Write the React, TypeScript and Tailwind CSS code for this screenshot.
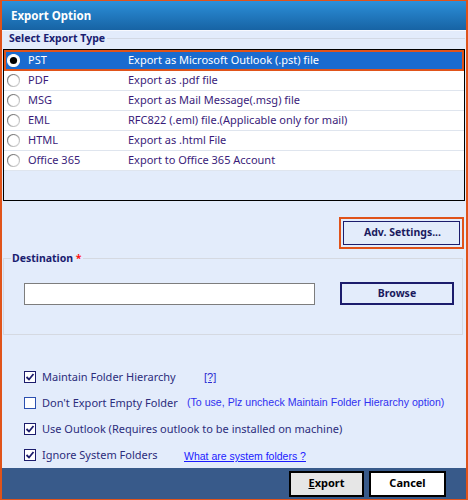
import React from "react";

const rows = [
  { k: "PST", d: "Export as Microsoft Outlook (.pst) file" },
  { k: "PDF", d: "Export as .pdf file" },
  { k: "MSG", d: "Export as Mail Message(.msg) file" },
  { k: "EML", d: "RFC822 (.eml) file.(Applicable only for mail)" },
  { k: "HTML", d: "Export as .html File" },
  { k: "Office 365", d: "Export to Office 365 Account" },
];

function Radio({ on }: { on: boolean }) {
  return (
    <svg width="13" height="13" viewBox="0 0 13 13" className="shrink-0">
      <defs>
        <linearGradient id={on ? "rg1" : "rg0"} x1="0" y1="0" x2="1" y2="1">
          <stop offset="0" stopColor={on ? "#f4f4f4" : "#6f6f6f"} />
          <stop offset="1" stopColor={on ? "#ffffff" : "#e2e2e2"} />
        </linearGradient>
      </defs>
      <circle cx="6.5" cy="6.5" r="6" fill="#ffffff" stroke={`url(#${on ? "rg1" : "rg0"})`} strokeWidth="1.2" />
      {on && <circle cx="6.5" cy="6.5" r="3.6" fill="#000000" />}
    </svg>
  );
}

function Check({ on }: { on: boolean }) {
  return (
    <span className={`flex h-[12px] w-[12px] shrink-0 items-center justify-center border bg-white ${on ? "border-[#1c1c6c]" : "border-[#2a4fb0]"}`}>
      {on && (
        <svg width="10" height="10" viewBox="0 0 10 10">
          <path d="M1.5 5 L4 7.5 L8.5 2" fill="none" stroke="#1c1c6c" strokeWidth="1.8" />
        </svg>
      )}
    </span>
  );
}

const arial = { fontFamily: '"Liberation Sans", Arial, sans-serif' };

export default function App() {
  const font = { fontFamily: '"Noto Sans", "Open Sans", sans-serif' };
  return (
    <div
      className="flex h-[500px] w-[468px] flex-col border-x-2 border-t border-b border-[#e0531a] bg-[#e3ecfb] text-[11px] whitespace-nowrap"
      style={font}
    >
      <div className="flex h-[29px] shrink-0 items-center bg-gradient-to-b from-[#2c90da] to-[#1763a4] pl-[9px] text-[11.5px] font-bold text-white">
        Export Option
      </div>
      <div className="h-[1px] bg-white/70" />
      <div className="mt-[1px] flex h-[14px] items-center pl-[7px] pr-[1px]">
        <span className="text-[10.5px] font-bold text-[#1a2070]">Select Export Type</span>
        <div className="ml-[2px] h-[1px] flex-1 bg-[#d3d9e4]" />
      </div>
      <div className="mx-[1px] mt-[3px] flex h-[153px] flex-col border border-black bg-[#e3ecfb]">
        {rows.map((r, i) => {
          const sel = i === 0;
          return (
            <div
              key={r.k}
              className={
                sel
                  ? "flex h-[21px] items-center border-2 border-[#e0531a] bg-[#1a6bcf] pl-[1px] text-white"
                  : "flex h-[20px] items-center border-b border-[#dfe5ee] bg-white pl-[3px] text-[#3a1c7a]"
              }
            >
              <Radio on={sel} />
              <span className="ml-[8px] w-[100px] shrink-0">{r.k}</span>
              <span>{r.d}</span>
            </div>
          );
        })}
      </div>
      <div className="mt-[16px] flex justify-end pr-[2px]">
        <div className="flex h-[32px] w-[125px] border-2 border-[#e0531a] p-[2px]">
          <div className="flex flex-1 items-center justify-center border border-[#1c1c6c] pl-[2px] text-[10.5px] font-bold text-[#1a1a5e]">
            Adv. Settings...
          </div>
        </div>
      </div>
      <fieldset className="mt-[2px] ml-[1px] mr-[3px] border border-[#d5d9e1] pb-[29px]">
        <legend className="ml-[7px] px-[1px] text-[10.5px] font-bold text-[#1a2070]">
          Destination <span className="text-[#ff1010]">*</span>
        </legend>
        <div className="mt-[16px] flex items-center pl-[20px]">
          <div className="h-[22px] w-[291px] shrink-0 border-[1.5px] border-[#7d7d7d] bg-white" />
          <div className="ml-[25px] flex h-[23px] w-[114px] shrink-0 items-center justify-center border-2 border-[#1c1c6c] text-[10.5px] font-bold text-[#1a1a5e]">
            Browse
          </div>
        </div>
      </fieldset>
      <div className="mt-[29px] flex flex-col pl-[22px] text-[#2c2c7c]">
        <div className="flex h-[26px] items-center">
          <Check on />
          <span className="ml-[6px] w-[162px] shrink-0">Maintain Folder Hierarchy</span>
          <span className="text-[11px] text-[#2a2ad0] underline" style={arial}>[?]</span>
        </div>
        <div className="flex h-[26px] items-center">
          <Check on={false} />
          <span className="ml-[6px] w-[145px] shrink-0">Don't Export Empty Folder</span>
          <span className="text-[10.6px] text-[#3030f0]" style={arial}>
            (To use, Plz uncheck Maintain Folder Hierarchy option)
          </span>
        </div>
        <div className="flex h-[26px] items-center">
          <Check on />
          <span className="ml-[6px]">Use Outlook (Requires outlook to be installed on machine)</span>
        </div>
        <div className="flex h-[26px] items-center">
          <Check on />
          <span className="ml-[6px] w-[142px] shrink-0">Ignore System Folders</span>
          <span className="mt-[3px] text-[10.5px] text-[#1a1aff] underline" style={arial}>
            What are system folders ?
          </span>
        </div>
      </div>
      <div className="mt-auto flex h-[31px] items-center justify-end gap-[5px] bg-[#385a8a] pr-[20px]">
        <div className="flex h-[26px] w-[75px] items-center justify-center border-2 border-black bg-[#e6e6e6] text-[11px] font-bold text-black">
          <span><span className="underline">E</span>xport</span>
        </div>
        <div className="flex h-[26px] w-[77px] items-center justify-center border-2 border-black bg-white text-[11px] font-bold text-black">
          Cancel
        </div>
      </div>
    </div>
  );
}
